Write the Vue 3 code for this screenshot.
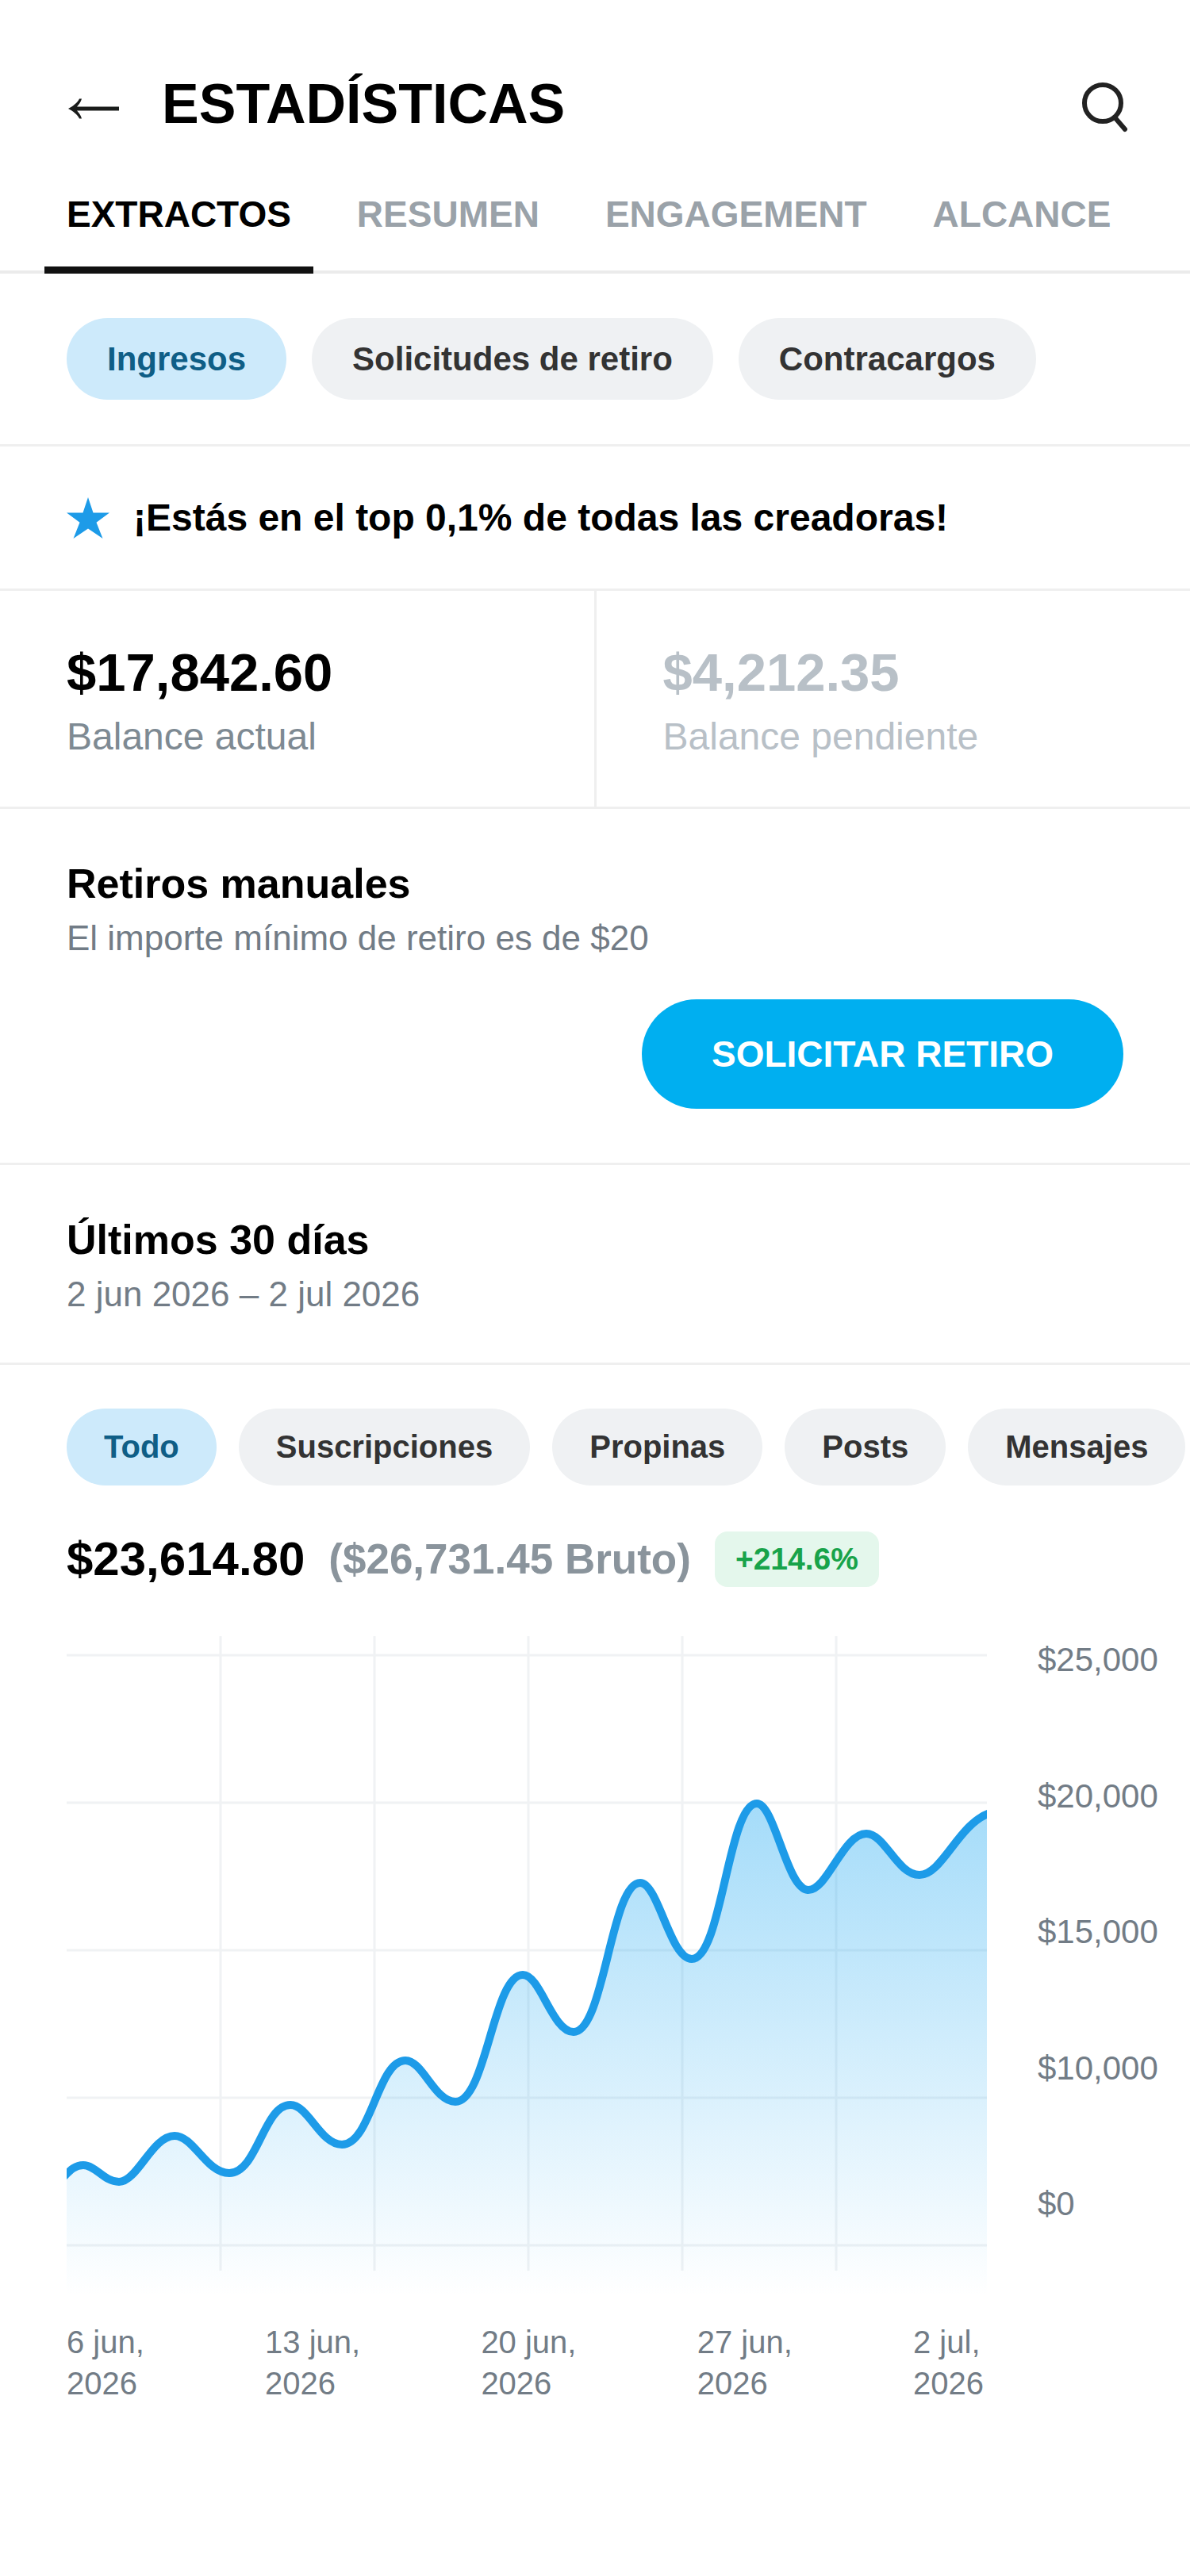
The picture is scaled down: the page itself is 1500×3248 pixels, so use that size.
<script setup>
import { ref } from 'vue'

const tabs = ['EXTRACTOS', 'RESUMEN', 'ENGAGEMENT', 'ALCANCE']
const activeTab = ref('EXTRACTOS')

const reports = ['Ingresos', 'Solicitudes de retiro', 'Contracargos']
const activeReport = ref('Ingresos')

const sources = ['Todo', 'Suscripciones', 'Propinas', 'Posts', 'Mensajes']
const activeSource = ref('Todo')

const amountTicks = ['$25,000', '$20,000', '$15,000', '$10,000', '$0']
const dateTicks = [
  ['6 jun,', '2026'],
  ['13 jun,', '2026'],
  ['20 jun,', '2026'],
  ['27 jun,', '2026'],
  ['2 jul,', '2026'],
]

// Chart geometry, in viewBox units.
const chartWidth = 1160
const chartHeight = 832
const columns = [194, 388, 582, 776, 970]
const rows = [24, 210, 396, 582, 768]

// Alternating highs and lows of the earnings curve.
const turns = [
  [21, 667], [66, 688], [136, 630], [205, 677], [282, 591], [347, 641],
  [427, 535], [490, 587], [575, 427], [639, 499], [723, 311], [788, 407],
  [870, 211], [935, 320], [1008, 249], [1075, 301],
]

// Steep climbs get longer handles, so they bend tighter in the middle.
function handles(rise, run) {
  if (rise < 0) return [0.35, 0.42]
  return rise / run > 1 ? [0.46, 0.44] : [0.33, 0.4]
}

function buildCurve() {
  let d = 'M-4 682 C4 674 10 667 21 667'
  for (let i = 1; i < turns.length; i++) {
    const [x0, y0] = turns[i - 1]
    const [x1, y1] = turns[i]
    const run = x1 - x0
    const [start, end] = handles(y0 - y1, run)
    d += ` C${x0 + run * start} ${y0} ${x1 - run * end} ${y1} ${x1} ${y1}`
  }
  return d + ' C1104 301 1124 236 1164 223'
}

const curve = buildCurve()
const area = `${curve} V${chartHeight} H-4 Z`
</script>

<template>
  <main class="page">
    <header class="header">
      <button class="icon-button" type="button" aria-label="Volver">
        <svg class="back-icon" viewBox="0 0 66 40" aria-hidden="true">
          <path d="M2 26C8 23 14 18 16 13.500H19C18 18 15 21 13 23.500H66V28.500H13C15 31 18 34 19 38.500H16C14 34 8 29 2 26Z" fill="#1a1c1b" />
        </svg>
      </button>
      <h1 class="title">ESTADÍSTICAS</h1>
      <button class="icon-button search" type="button" aria-label="Buscar">
        <svg class="search-icon" viewBox="0 0 72 72" fill="none" stroke="#222" stroke-width="6" stroke-linecap="round" aria-hidden="true">
          <circle cx="34" cy="35" r="23" />
          <path d="M50 54L62 68" />
        </svg>
      </button>
    </header>

    <nav class="tabs">
      <a
        v-for="tab in tabs"
        :key="tab"
        href="#"
        class="tab"
        :class="{ active: tab === activeTab }"
        @click.prevent="activeTab = tab"
      >{{ tab }}</a>
    </nav>

    <section class="reports">
      <button
        v-for="report in reports"
        :key="report"
        type="button"
        class="chip"
        :class="{ active: report === activeReport }"
        @click="activeReport = report"
      >{{ report }}</button>
    </section>

    <section class="rank">
      <svg class="star" viewBox="0 0 54 54" aria-hidden="true">
        <path d="M27 1L33.500 20.500H54L37.500 32.800L45.500 53L27 40.500L8.500 53L16.500 32.800L0 20.500H20.500Z" fill="#1d9be8" />
      </svg>
      <p class="rank-text">¡Estás en el top 0,1% de todas las creadoras!</p>
    </section>

    <section class="balances">
      <div class="balance">
        <p class="balance-amount">$17,842.60</p>
        <p class="balance-label">Balance actual</p>
      </div>
      <div class="divider"></div>
      <div class="balance pending">
        <p class="balance-amount">$4,212.35</p>
        <p class="balance-label">Balance pendiente</p>
      </div>
    </section>

    <section class="block payouts">
      <h2 class="block-title">Retiros manuales</h2>
      <p class="block-note">El importe mínimo de retiro es de $20</p>
      <button class="request" type="button">SOLICITAR RETIRO</button>
    </section>

    <section class="block">
      <h2 class="block-title">Últimos 30 días</h2>
      <p class="block-note">2 jun 2026 – 2 jul 2026</p>
    </section>

    <section class="earnings">
      <div class="sources">
        <button
          v-for="source in sources"
          :key="source"
          type="button"
          class="chip small"
          :class="{ active: source === activeSource }"
          @click="activeSource = source"
        >{{ source }}</button>
      </div>

      <div class="totals">
        <span class="net">$23,614.80</span>
        <span class="gross">($26,731.45 Bruto)</span>
        <span class="growth">+214.6%</span>
      </div>

      <div class="chart">
        <div class="plot">
          <svg class="graph" :viewBox="`0 0 ${chartWidth} ${chartHeight}`" role="img" aria-label="Ingresos de los últimos 30 días">
            <defs>
              <linearGradient id="earnings-fill" x1="0" y1="211" x2="0" y2="832" gradientUnits="userSpaceOnUse">
                <stop offset="0" stop-color="#0aa0f0" stop-opacity="0.37" />
                <stop offset="1" stop-color="#0aa0f0" stop-opacity="0" />
              </linearGradient>
            </defs>
            <g stroke="#f0f2f4" stroke-width="3">
              <path v-for="y in rows" :key="`r${y}`" :d="`M0 ${y}H${chartWidth}`" />
              <path v-for="x in columns" :key="`c${x}`" :d="`M${x} 0V800`" />
            </g>
            <path :d="area" fill="url(#earnings-fill)" />
            <path :d="curve" fill="none" stroke="#1d9be8" stroke-width="10" />
          </svg>
          <div class="dates">
            <div v-for="[day, year] in dateTicks" :key="day" class="date">
              <span>{{ day }}</span>
              <span>{{ year }}</span>
            </div>
          </div>
        </div>
        <div class="amounts">
          <span v-for="tick in amountTicks" :key="tick">{{ tick }}</span>
        </div>
      </div>
    </section>
  </main>
</template>

<style>
body {
  margin: 0;
  background: #fff;
}
</style>

<style scoped>
.page {
  box-sizing: border-box;
  overflow: hidden;
  padding-bottom: 217px;
  background: #fff;
  color: #000;
  font-family: "Liberation Sans", Arial, Helvetica, sans-serif;
}

h1,
h2,
p {
  margin: 0;
}

button {
  padding: 0;
  border: 0;
  background: none;
  color: inherit;
  font: inherit;
  white-space: nowrap;
  cursor: pointer;
}

.header {
  display: flex;
  align-items: center;
  height: 80px;
  padding: 91px 72px 71px 84px;
}

.icon-button {
  display: flex;
}

.back-icon {
  width: 66px;
  height: 40px;
}

.search {
  margin-left: auto;
}

.search-icon {
  width: 72px;
  height: 72px;
}

.title {
  margin-left: 54px;
  font-size: 70px;
  line-height: 80px;
  font-weight: 700;
}

.tabs {
  display: flex;
  gap: 27px;
  padding: 0 56px;
  box-shadow: inset 0 -4px #ebebeb;
}

.tab {
  padding: 0 28px 38px;
  border-bottom: 9px solid transparent;
  color: #9aa2a9;
  font-size: 46px;
  line-height: 56px;
  font-weight: 700;
  text-decoration: none;
}

.tab.active {
  border-bottom-color: #111;
  color: #000;
}

.reports {
  display: flex;
  gap: 32px;
  padding: 56px 84px;
  border-bottom: 3px solid #efefef;
}

.chip {
  flex: none;
  height: 103px;
  padding: 0 51px;
  border-radius: 52px;
  background: #eff1f3;
  color: #333;
  font-size: 42px;
  font-weight: 700;
}

.chip.small {
  height: 97px;
  padding: 0 47px;
  font-size: 40px;
}

.chip.active {
  background: #cdeafb;
  color: #0f5e86;
}

.rank {
  display: flex;
  align-items: center;
  gap: 30px;
  padding: 62px 84px;
  border-bottom: 3px solid #efefef;
}

.star {
  flex: none;
  width: 54px;
  height: 54px;
}

.rank-text {
  font-size: 48px;
  line-height: 55px;
  font-weight: 700;
}

.balances {
  display: grid;
  grid-template-columns: 1fr 3px 1fr;
  border-bottom: 3px solid #efefef;
}

.divider {
  background: #efefef;
}

.balance {
  padding: 63px 84px 60px;
}

.balance-amount {
  margin-bottom: 13px;
  font-size: 67px;
  line-height: 80px;
  font-weight: 700;
}

.balance-label {
  color: #7e8a93;
  font-size: 48px;
  line-height: 56px;
}

.pending .balance-amount,
.pending .balance-label {
  color: #b8c0c7;
}

.block {
  display: flex;
  flex-direction: column;
  padding: 62px 84px 60px;
  border-bottom: 3px solid #efefef;
}

.payouts {
  padding-bottom: 68px;
}

.block-title {
  margin-bottom: 11px;
  font-size: 52px;
  line-height: 64px;
  font-weight: 700;
}

.block-note {
  color: #727c86;
  font-size: 44px;
  line-height: 52px;
}

.request {
  align-self: flex-end;
  height: 138px;
  margin-top: 51px;
  padding: 0 88px;
  border-radius: 69px;
  background: #00aff0;
  color: #fff;
  font-size: 46px;
  font-weight: 700;
}

.sources {
  display: flex;
  gap: 28px;
  overflow: hidden;
  padding: 55px 0 0 84px;
}

.totals {
  display: flex;
  align-items: center;
  margin-top: 58px;
  padding: 0 84px;
  font-weight: 700;
}

.net {
  font-size: 60px;
  line-height: 70px;
}

.gross {
  margin-left: 30px;
  color: #8a949c;
  font-size: 53px;
  line-height: 70px;
}

.growth {
  margin-left: 30px;
  padding: 0 26px;
  border-radius: 16px;
  background: #e4f7ec;
  color: #18a34a;
  font-size: 39px;
  line-height: 70px;
}

.chart {
  display: flex;
  gap: 64px;
  margin-top: 62px;
  padding: 0 40px 0 84px;
  color: #727c86;
}

.plot {
  flex: 1;
  min-width: 0;
}

.graph {
  display: block;
  width: 100%;
  height: auto;
}

.dates {
  display: flex;
  justify-content: space-between;
  margin-top: 32px;
  padding-right: 4px;
  font-size: 40px;
  line-height: 52px;
}

.date {
  display: flex;
  flex-direction: column;
}

.amounts {
  display: flex;
  flex-direction: column;
  justify-content: space-between;
  width: 152px;
  padding: 5px 0 227px;
  font-size: 42px;
  line-height: 50px;
}
</style>
